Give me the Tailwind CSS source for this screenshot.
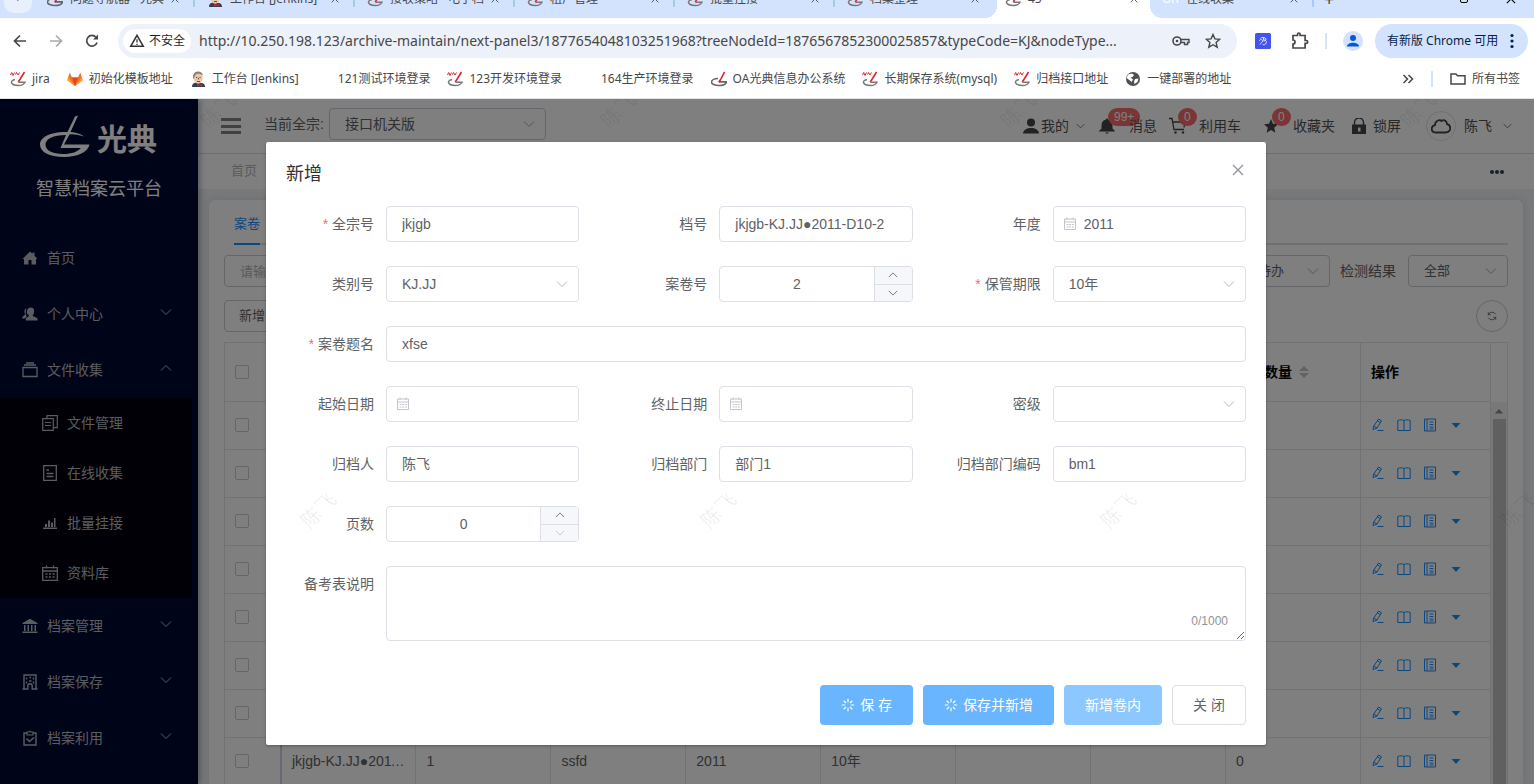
<!DOCTYPE html>
<html lang="zh-CN">
<head>
    <meta charset="UTF-8">
    <meta name="viewport" content="width=device-width, initial-scale=1.0">
    <title>智慧档案云平台</title>
    <script src="https://cdn.jsdelivr.net/npm/@tailwindcss/browser@4"></script>
</head>
<body class="h-screen flex flex-col overflow-hidden bg-white font-['Liberation_Sans','Noto_Sans_CJK_SC',sans-serif] text-sm text-[#606266]">

    <!-- shared icons -->
    <svg class="hidden">
        <symbol id="i-down" viewBox="0 0 12 12"><path d="M1 3.5l5 5 5-5" fill="none" stroke="currentColor"/></symbol>
        <symbol id="i-up" viewBox="0 0 12 12"><path d="M1 8.5l5-5 5 5" fill="none" stroke="currentColor"/></symbol>
        <symbol id="i-x" viewBox="0 0 12 12"><path d="M1 1l10 10M11 1L1 11" fill="none" stroke="currentColor" stroke-width="1.3"/></symbol>
        <symbol id="i-date" viewBox="0 0 14 14"><path d="M1.500 2h11v10.500h-11zM1.500 5h11M4 .5v2.500M10 .5v2.500M3.500 7.500h2M6.200 7.500h1.800M8.800 7.500h2M3.500 10h2M6.200 10h1.800M8.800 10h2" fill="none" stroke="currentColor"/></symbol>
        <symbol id="i-swoosh" viewBox="0 0 16 16"><path d="M7 7.500C3 7.500.5 9.300.5 11.200S4 14.500 8 14.500s7-1.700 7.500-3.600H8" fill="none" stroke="#666" stroke-width="1.6"/><path d="M13.500.8L9.600 8.500 7.600 11.200" fill="none" stroke="#e0262d" stroke-width="1.6"/></symbol>
        <symbol id="i-test" viewBox="0 0 16 16"><path d="M5 8.500C2.500 9 1.200 10.300 1.500 11.500c.5 1.900 3.500 3 7 3 3.300 0 5.500-1.200 6.500-3.300H8.500" fill="none" stroke="#777" stroke-width="1.4"/><path d="M14.500 1L10.200 8 8.200 11" fill="none" stroke="#e0262d" stroke-width="1.6"/><path d="M.5 4L1.700 1.500l1.300 3L4.500 1.500M5.500 3.500l1-2 1.500 2.500L9.500 1.500" fill="none" stroke="#e0262d"/></symbol>
        <symbol id="i-jenkins" viewBox="0 0 16 16"><path d="M2 16c0-3 1.500-4 4-4.500L12 12c2 .4 3 1.800 3 4z" fill="#2b3f55"/><path d="M3.500 6C3.500 2.500 5.500.8 8 .8S12.700 2.500 12.700 6c0 4-2 6.700-4.500 6.700S3.500 10 3.500 6z" fill="#e8c9a8"/><path d="M3.200 8C2.300 3.500 4.500.5 8 .5c2.800 0 4.500 1.600 4.800 4-1.800-1.500-3.800-2-6-1.700C4.800 4 5 6 3.200 8z" fill="#8a8078"/><path d="M6 6.500h1.200M9.500 6.500h1.200M8.500 7v1.500M7 10.500h3" stroke="#43352c" stroke-width=".8"/><path d="M7 12.800l2.500 1 2.500-1v3l-2.500-1-2.500 1z" fill="#c9252c"/></symbol>
        <symbol id="i-edit" viewBox="0 0 14 14"><path d="M2 11.500l.8-3.500L7.500 1l3 1.800L6 10zM6.500 2.800l2.800 1.800M2.800 8L6 10M6.500 12.500h6" fill="none" stroke="currentColor"/></symbol>
        <symbol id="i-book" viewBox="0 0 14 14"><path d="M.8 2.500C3 1.500 5.500 1.700 7 2.500c1.500-.8 4-1 6.200 0V12.500H7.800L7 13l-.8-.5H.8zM7 2.500V13" fill="none" stroke="currentColor"/></symbol>
        <symbol id="i-note" viewBox="0 0 14 14"><path d="M1.500 1h11v12h-11zM4 1v12M6.500 4h4M6.500 6.500h4M6.500 9h4M6.500 11h4" fill="none" stroke="currentColor"/></symbol>
        <symbol id="i-load" viewBox="0 0 14 14"><path d="M7 .8v3.400M7 9.800v3.400M.8 7h3.400M9.800 7h3.400M2.600 2.600L5 5M9 9l2.400 2.400M2.600 11.400L5 9M9 5l2.400-2.400" fill="none" stroke="currentColor" stroke-width="1.2"/></symbol>
    </svg>

    <!-- browser bar -->
    <header class="shrink-0 bg-white border-b border-[#dfe3e8] text-xs text-[#474747] font-['Noto_Sans','Noto_Sans_CJK_SC',sans-serif]">
        <div class="h-[18px] bg-[#d3e3fd] overflow-hidden flex flex-col justify-end">
            <div class="h-[38px] shrink-0 flex items-center">
                <div class="w-7 h-7 ml-1 mr-[3px] rounded-[10px] bg-[#e9f0fd] flex justify-center items-center"><svg class="size-2"><use href="#i-down"/></svg></div>
                <div class="w-40 pl-3 pr-3.5 flex items-center gap-[7px] border-r-2 border-[#a8c7fa]"><svg class="size-4 shrink-0"><use href="#i-swoosh"/></svg><span class="flex-1 whitespace-nowrap overflow-hidden">问题导航器 - 光典</span><svg class="size-2 shrink-0"><use href="#i-x"/></svg></div>
                <div class="w-40 pl-3 pr-3.5 flex items-center gap-[7px] border-r-2 border-[#a8c7fa]"><svg class="size-4 shrink-0"><use href="#i-jenkins"/></svg><span class="flex-1 whitespace-nowrap overflow-hidden">工作台 [Jenkins]</span><svg class="size-2 shrink-0"><use href="#i-x"/></svg></div>
                <div class="w-40 pl-3 pr-3.5 flex items-center gap-[7px] border-r-2 border-[#a8c7fa]"><svg class="size-4 shrink-0"><use href="#i-test"/></svg><span class="flex-1 whitespace-nowrap overflow-hidden">接收策略 - 电子档案</span><svg class="size-2 shrink-0"><use href="#i-x"/></svg></div>
                <div class="w-40 pl-3 pr-3.5 flex items-center gap-[7px] border-r-2 border-[#a8c7fa]"><svg class="size-4 shrink-0"><use href="#i-test"/></svg><span class="flex-1 whitespace-nowrap overflow-hidden">租户管理</span><svg class="size-2 shrink-0"><use href="#i-x"/></svg></div>
                <div class="w-40 pl-3 pr-3.5 flex items-center gap-[7px] border-r-2 border-[#a8c7fa]"><svg class="size-4 shrink-0"><use href="#i-test"/></svg><span class="flex-1 whitespace-nowrap overflow-hidden">批量挂接</span><svg class="size-2 shrink-0"><use href="#i-x"/></svg></div>
                <div class="w-[162px] self-stretch pl-3 pr-[18px] flex items-center gap-[7px]"><svg class="size-4 shrink-0"><use href="#i-test"/></svg><span class="flex-1 whitespace-nowrap overflow-hidden">档案整理</span><svg class="size-2 shrink-0"><use href="#i-x"/></svg></div>
                <!-- the white behind the active tab shows round its neighbours' corners -->
                <div class="w-[153px] self-stretch bg-white pl-2 pr-3 flex items-center gap-[7px] relative before:absolute before:-left-3 before:bottom-0 before:size-3 before:bg-[radial-gradient(circle_at_0_0,#d3e3fd_12px,#fff_12px)] after:absolute after:-right-3 after:bottom-0 after:size-3 after:bg-[radial-gradient(circle_at_100%_0,#d3e3fd_12px,#fff_12px)]"><svg class="size-4 shrink-0"><use href="#i-test"/></svg><span class="flex-1">45</span><svg class="size-2"><use href="#i-x"/></svg></div>
                <div class="w-[164px] pl-3 pr-3.5 flex items-center gap-2 border-r-2 border-[#a8c7fa]"><span class="text-white w-4">On</span><span class="flex-1">在线收集</span><svg class="size-2"><use href="#i-x"/></svg></div>
                <span class="pl-2.5 text-lg">+</span>
                <div class="ml-auto pr-[18px] flex items-center gap-[38px] text-black"><span class="size-2 border rounded-xs"></span><svg class="size-2.5"><use href="#i-x"/></svg></div>
            </div>
        </div>
        <div class="h-[44px] pt-0.5 pl-3 pr-1.5 flex items-center">
            <button aria-label="后退" class="w-4 mr-5"><svg class="size-4" viewBox="0 0 16 16"><path d="M14 8H3M8 2.500L2.500 8 8 13.500" fill="none" stroke="#474747" stroke-width="1.7"/></svg></button>
            <button aria-label="前进" class="w-4 mr-5"><svg class="size-4" viewBox="0 0 16 16"><path d="M2 8h11M8 2.500L13.500 8 8 13.500" fill="none" stroke="#aaa" stroke-width="1.7"/></svg></button>
            <button aria-label="重新加载" class="w-4 mr-[18px]"><svg class="size-4" viewBox="0 0 16 16"><path d="M13 9.500A5.300 5.300 0 1 1 12 4.300" fill="none" stroke="#474747" stroke-width="1.7"/><path d="M14 1.500v5H9z" fill="#474747"/></svg></button>
            <div class="flex-1 min-w-0 h-[34px] rounded-full bg-[#ecf1fa] pl-[5px] pr-4 flex items-center">
                <button class="h-6 w-[68px] shrink-0 rounded-full bg-white flex items-center justify-center gap-1 text-[#1f1f1f]">
                    <svg class="size-4" viewBox="0 0 16 16"><path d="M8 2.300L14.300 13.300H1.700z" fill="none" stroke="#333" stroke-width="1.5"/><path d="M8 6.300v3.300M8 10.700v1.300" stroke="#333" stroke-width="1.3"/></svg>不安全</button>
                <input aria-label="地址" class="flex-1 min-w-0 ml-2 bg-transparent text-sm outline-none" value="http://10.250.198.123/archive-maintain/next-panel3/1877654048103251968?treeNodeId=1876567852300025857&amp;typeCode=KJ&amp;nodeType...">
                <svg class="w-[18px] h-4 ml-4 mr-[15px] shrink-0" viewBox="0 0 18 16"><circle cx="5" cy="8" r="4" fill="none" stroke="#474747" stroke-width="1.6"/><circle cx="5" cy="8" r="1.3" fill="#474747"/><path d="M9 6.500h8v3h-1.500v2h-3v-2H9" fill="none" stroke="#474747" stroke-width="1.4"/></svg>
                <svg class="size-4 shrink-0" viewBox="0 0 16 16"><path d="M8 1.500l1.900 4.400 4.800.4-3.600 3.200 1.100 4.700L8 11.700l-4.200 2.500 1.100-4.700L1.300 6.300l4.800-.4z" fill="none" stroke="#474747" stroke-width="1.4"/></svg>
            </div>
            <svg class="size-4 ml-[18px] mr-5 shrink-0" viewBox="0 0 16 16"><rect width="16" height="16" rx="1.5" fill="#4355ee"/><path d="M5.500 5.500c.5-1.500 5-1.500 5.500.5.200 1.500-1.500 2-2.500 2M4.500 8c0-2 3-2 3 0s-2.500 2-2.500 3.500M9 7c2.500 0 3 2.500 1.500 4-1 1-2.500 1-3 0M8.500 4.500v3" fill="none" stroke="#dfe3ff"/></svg>
            <svg class="size-[18px] mr-4 shrink-0" viewBox="0 0 18 18"><path d="M2 3.500h4.500V2.300a1.300 1.300 0 0 1 2.600 0v1.200h5v5h1.200a1.400 1.400 0 0 1 0 2.800h-1.200V16H2v-4a2 2 0 0 0 0-4z" fill="none" stroke="#474747" stroke-width="1.7"/></svg>
            <span class="w-0.5 h-4 bg-[#d3e3fd] mr-4"></span>
            <svg class="size-5 mr-3 shrink-0" viewBox="0 0 20 20"><circle cx="10" cy="10" r="10" fill="#d3e3fd"/><circle cx="10" cy="7" r="3" fill="#0b57d0"/><path d="M4 15.500c0-5 12-5 12 0z" fill="#0b57d0"/></svg>
            <button class="h-[34px] w-[153px] shrink-0 rounded-full bg-[#d3e3fd] text-[#041e49] flex items-center pl-3 pr-3.5 justify-between whitespace-nowrap">有新版 Chrome 可用
                <svg class="w-1 h-4" viewBox="0 0 4 16"><g fill="#041e49"><circle cx="2" cy="2.5" r="1.6"/><circle cx="2" cy="8" r="1.6"/><circle cx="2" cy="13.5" r="1.6"/></g></svg></button>
        </div>
        <nav class="h-9 pb-0.5 pl-2.5 pr-3.5 flex items-center gap-[17px] whitespace-nowrap">
            <a href="#" class="flex items-center gap-1.5"><svg class="size-4"><use href="#i-test"/></svg>jira</a>
            <a href="#" class="flex items-center gap-1.5"><svg class="size-4" viewBox="0 0 16 16"><path d="M8 15L.3 9.200 2.700 1.500 5 6.500h6l2.300-5 2.400 7.700z" fill="#fc6d26"/><path d="M8 15L5 6.500h6z" fill="#e24329"/><path d="M8 15L.3 9.200l1-2.700zM8 15l7.700-5.800-1-2.700z" fill="#fca326"/></svg>初始化模板地址</a>
            <a href="#" class="flex items-center gap-1.5"><svg class="size-4"><use href="#i-jenkins"/></svg>工作台 [Jenkins]</a>
            <a href="#" class="flex items-center gap-1.5"><span class="size-4"></span>121测试环境登录</a>
            <a href="#" class="flex items-center gap-1.5"><svg class="size-4"><use href="#i-test"/></svg>123开发环境登录</a>
            <a href="#" class="flex items-center gap-1.5"><span class="size-4"></span>164生产环境登录</a>
            <a href="#" class="flex items-center gap-1.5"><svg class="size-4"><use href="#i-swoosh"/></svg>OA光典信息办公系统</a>
            <a href="#" class="flex items-center gap-1.5"><svg class="size-4"><use href="#i-test"/></svg>长期保存系统(mysql)</a>
            <a href="#" class="flex items-center gap-1.5"><svg class="size-4"><use href="#i-test"/></svg>归档接口地址</a>
            <a href="#" class="flex items-center gap-1.5"><svg class="size-4" viewBox="0 0 16 16"><circle cx="8" cy="8" r="7" fill="#4d5156"/><path d="M3 3.500L7 2.500 9 4 7.500 6 5.500 6.500 8 8.500 6.500 11 5 9.500 1.500 7zM10 8l3.500-.5-1 3.500L9.500 13l-.5-2.500z" fill="#fff"/></svg>一键部署的地址</a>
            <button aria-label="更多书签" class="ml-auto"><svg class="w-3 h-4" viewBox="0 0 12 16"><path d="M1.500 4l4 4-4 4M6.500 4l4 4-4 4" fill="none" stroke="#474747" stroke-width="1.5"/></svg></button>
            <span class="w-0.5 h-4 bg-[#d3e3fd]"></span>
            <a href="#" class="flex items-center gap-1.5"><svg class="size-4" viewBox="0 0 16 16"><path d="M1 3h5l1.500 1.700H15V13H1z" fill="none" stroke="#474747" stroke-width="1.5"/></svg>所有书签</a>
        </nav>
    </header>

    <div class="flex-1 min-h-0 relative overflow-hidden">
        <div class="h-full flex">

            <!-- sidebar -->
            <aside class="w-[198px] shrink-0 bg-[#000830] text-[#b4b9c0] shadow-[2px_0_6px_#00152959] z-10">
                <div class="h-[74px] pl-[39px] flex items-center gap-1.5 text-white">
                    <svg class="w-[52px] h-11 shrink-0" viewBox="0 0 52 44"><path fill="currentColor" fill-rule="evenodd" d="M39 1.500l-7.500 16.500C37 18.500 42 20 45 22.500 38 20.500 33.500 20 30.500 20.500L25 30.500h25.500C49 38 39 43 25 43 10 43 1 38 1 30.500 1 23 12 17.500 28.500 18L36 2.500zM27 21C14 21 6.500 25 6.500 30.500c0 6 7 9.500 17.500 9.500 9 0 14.500-2.200 18-6H21.500z"/></svg>
                    <span class="pt-2 text-[30px] leading-10 font-bold">光典</span>
                </div>
                <h1 class="h-[57px] pb-[25px] text-lg leading-8 text-center text-white">智慧档案云平台</h1>
                <ul>
                    <li><a href="#" class="h-14 pl-[22px] flex items-center gap-2"><svg class="size-4" viewBox="0 0 16 16"><path d="M8 1.500l2.500 2.300V2.500h2v3.200L15.500 9H14v5.500H9.500V10h-3v4.500H2V9H.5z" fill="currentColor"/></svg><span class="pl-px">首页</span></a></li>
                    <li><a href="#" class="h-14 pl-[22px] pr-[26px] flex items-center gap-2"><svg class="size-4" viewBox="0 0 16 16"><path d="M5 7.500C4.500 5 5.500 1.500 8.800 1.500s4 3.500 3 6c-.5 1.200-1 1.500-1 2.500l4.700 2.200v2.300H3.800v-2.300L7 10c0-1-1.500-1.300-2-2.500z" fill="currentColor"/><path d="M4.500 2.500C2 3 2 6.500 3.300 8.300L.3 11v1.500h2.500l2-2C3.500 8.500 3.300 5 4.500 2.500z" fill="currentColor"/></svg><span class="pl-px">个人中心</span><svg class="size-3 ml-auto mb-1"><use href="#i-down"/></svg></a></li>
                    <li>
                        <a href="#" class="h-14 pl-[22px] pr-[26px] flex items-center gap-2"><svg class="size-4" viewBox="0 0 16 16"><path d="M1 5.500h14v9H1z" fill="none" stroke="currentColor" stroke-width="1.3"/><path d="M2 3h12M4 1h8" stroke="currentColor" stroke-width="1.3"/></svg><span class="pl-px">文件收集</span><svg class="size-3 ml-auto mb-1"><use href="#i-up"/></svg></a>
                        <ul class="mr-1.5 bg-[#00000c]">
                            <li><a href="#" class="h-[50px] pl-[42px] flex items-center gap-2"><svg class="size-4" viewBox="0 0 16 16"><path d="M.7 3.700h10.600v11.600H.7zM5 3.500V.7h10.300v12H11.500M3 7.500h6M3 10.500h6" fill="none" stroke="currentColor" stroke-width="1.2"/></svg><span class="pl-px">文件管理</span></a></li>
                            <li><a href="#" class="h-[50px] pl-[42px] flex items-center gap-2"><svg class="size-4" viewBox="0 0 16 16"><path d="M1.700.7h12.600v14.600H1.700zM4.500 5h2.500M4.500 8.500h7M4.500 11.500h7" fill="none" stroke="currentColor" stroke-width="1.3"/></svg><span class="pl-px">在线收集</span></a></li>
                            <li><a href="#" class="h-[50px] pl-[42px] flex items-center gap-2"><svg class="size-4" viewBox="0 0 16 16"><path d="M1 12.500h14V14H1zM3 9h2v3H3zM6 5.500h2V12H6zM9 7.500h2V12H9zM12 3h1.500v9H12z" fill="currentColor"/></svg><span class="pl-px">批量挂接</span></a></li>
                            <li><a href="#" class="h-[50px] pl-[42px] flex items-center gap-2"><svg class="size-4" viewBox="0 0 16 16"><path d="M.7 2.700h14.600v12.600H.7zM.7 6h14.600M4.500.5v3M11.500.5v3M3.500 9h2M7 9h2M10.500 9h2M3.500 12h2M7 12h2M10.500 12h2" fill="none" stroke="currentColor" stroke-width="1.3"/></svg><span class="pl-px">资料库</span></a></li>
                        </ul>
                    </li>
                    <li><a href="#" class="h-14 pl-[22px] pr-[26px] flex items-center gap-2"><svg class="size-4" viewBox="0 0 16 16"><path d="M8 .8l7.500 4.200v1H.5V5zM2 7h1.500v6H2zM5.500 7H7v6H5.500zM9 7h1.500v6H9zM12.500 7H14v6h-1.500zM.5 13.500h15V15H.5z" fill="currentColor"/></svg><span class="pl-px">档案管理</span><svg class="size-3 ml-auto mb-1"><use href="#i-down"/></svg></a></li>
                    <li><a href="#" class="h-14 pl-[22px] pr-[26px] flex items-center gap-2"><svg class="size-4" viewBox="0 0 16 16"><path d="M2 15V1h12v14M.5 15h5.300v-3a2.200 2.200 0 0 1 4.400 0v3h5.300M4.500 3.500v2M7.500 3.500H9M11.500 3.500v2M4.500 7.500v2M7 7h2.500M11.500 7.500v2" fill="none" stroke="currentColor" stroke-width="1.4"/></svg><span class="pl-px">档案保存</span><svg class="size-3 ml-auto mb-1"><use href="#i-down"/></svg></a></li>
                    <li><a href="#" class="h-14 pl-[22px] pr-[26px] flex items-center gap-2"><svg class="size-4" viewBox="0 0 16 16"><path d="M5 3H2v12h12V3h-3" fill="none" stroke="currentColor" stroke-width="1.4"/><path d="M5 2h2a1.200 1.200 0 0 1 2 0h2v3H5z" fill="none" stroke="currentColor" stroke-width="1.2"/><path d="M4.500 8.500L7.500 11.500 12 7.500" fill="none" stroke="currentColor" stroke-width="1.6"/></svg><span class="pl-px">档案利用</span><svg class="size-3 ml-auto mb-1"><use href="#i-down"/></svg></a></li>
                </ul>
            </aside>

            <main class="flex-1 min-w-0 flex flex-col bg-[#f0f2f5]">
                <!-- top bar -->
                <div class="h-[55px] shrink-0 bg-white border-b border-[#d8dce5] pl-[23px] pr-[22px] flex items-center text-[#515151]">
                    <button aria-label="折叠菜单" class="w-5 h-4 flex flex-col justify-between mr-[23px]"><span class="h-[3px] w-full bg-[#808285]"></span><span class="h-[3px] w-full bg-[#808285]"></span><span class="h-[3px] w-full bg-[#808285]"></span></button>
                    <div class="pb-1 flex items-center">
                        <label for="fonds" class="w-[65px] text-[#606266]">当前全宗:</label>
                        <div class="relative w-[217px]">
                            <select id="fonds" class="block w-full h-8 pl-[15px] border border-[#c8ccd4] rounded appearance-none text-[#606266]"><option>接口机关版</option></select>
                            <svg class="size-3 absolute right-[11px] top-2.5 text-[#a8abb2]"><use href="#i-down"/></svg>
                        </div>
                    </div>
                    <button class="ml-auto flex items-center"><svg class="size-4 mr-0.5" viewBox="0 0 16 16"><circle cx="8" cy="4.5" r="4" fill="#444"/><path d="M0 15.500C0 8 16 8 16 15.500z" fill="#444"/></svg>我的<svg class="w-[9px] h-3 ml-[7px]"><use href="#i-down"/></svg></button>
                    <button class="ml-3.5 relative flex items-center"><svg class="size-4 mr-3.5" viewBox="0 0 16 16"><path d="M8 0l1 1.500c3 .5 4.500 2.800 4.500 6v3L16 13v.5H0V13l2.500-2.500v-3c0-3.200 1.500-5.500 4.500-6zM6 14.500h4L8 16z" fill="#444"/></svg><span class="absolute left-[9px] -top-2 h-[18px] px-1.5 rounded-full bg-[#f56c6c] text-white text-xs leading-[18px]">99+</span><span class="relative">消息</span></button>
                    <button class="ml-3 relative flex items-center"><svg class="w-[17px] h-[18px] mr-[13px]" viewBox="0 0 17 18"><path d="M0 1.500h3L5 12.500h10M4 5h12l-1 5.500" fill="none" stroke="#444" stroke-width="1.3"/><circle cx="6.500" cy="15.5" r="1.2" fill="#444"/><circle cx="14" cy="15.5" r="1.2" fill="#444"/></svg>利用车<span class="absolute left-[9px] -top-2 h-[18px] px-1.5 rounded-full bg-[#f56c6c] text-white text-xs leading-[18px]">0</span></button>
                    <button class="ml-[23px] relative flex items-center"><svg class="size-3.5 mr-[15px]" viewBox="0 0 14 14"><path d="M7 0l2 4.800 5 .5-3.800 3.400 1.200 5L7 11l-4.400 2.700 1.200-5L0 5.300l5-.5z" fill="#444"/></svg>收藏夹<span class="absolute left-2 -top-2 h-[18px] px-1.5 rounded-full bg-[#f56c6c] text-white text-xs leading-[18px]">0</span></button>
                    <button class="ml-[17px] flex items-center"><svg class="w-3.5 h-4 mr-[7px]" viewBox="0 0 14 16"><path d="M2.500 7V4.500a4.500 4.500 0 0 1 9 0V7" fill="none" stroke="#444" stroke-width="1.4"/><path fill-rule="evenodd" d="M0 6.500h14V16H0zM6 9.500h2.500v4H6z" fill="#444"/></svg>锁屏</button>
                    <button class="ml-[25px] flex items-center"><span class="size-[30px] mr-2 rounded-full border border-[#e0e0e0] flex items-center justify-center"><svg class="w-5 h-4" viewBox="0 0 20 16"><path d="M5 14.500C-.5 14.500-.5 8 4 7 4 3 8.500 1 10.500 3c2-1.800 5.500-.3 5.500 3 4.500 1 4.500 8.500-1.500 8.500z" fill="none" stroke="#444" stroke-width="1.8"/></svg></span>陈飞<svg class="w-[9px] h-3 ml-[11px]"><use href="#i-down"/></svg></button>
                </div>
                <div class="h-[35px] shrink-0 bg-white pl-[33px] pr-[30px] flex items-center justify-between">
                    <a href="#" class="text-[13px] text-[#b4b7bd]">首页</a>
                    <button aria-label="更多" class="flex gap-px"><span class="size-1 rounded-full bg-[#304156]"></span><span class="size-1 rounded-full bg-[#304156]"></span><span class="size-1 rounded-full bg-[#304156]"></span></button>
                </div>

                <section class="mt-[11px] ml-[11px] mr-[11px] flex-1 min-h-0 overflow-hidden bg-white rounded-t-md shadow-[0_0_8px_#0000001a] px-[15px] text-[13px]">
                    <div class="ml-2.5 h-[45px] border-b-2 border-[#dcdfe6] flex">
                        <a href="#" class="h-[45px] leading-[48px] border-b-2 border-[#1890ff] text-[#1890ff]">案卷</a>
                    </div>
                    <div class="mt-2.5 h-8 flex items-center">
                        <input aria-label="关键字" placeholder="请输入关键字" class="w-60 h-8 px-[15px] border border-[#c8ccd4] rounded placeholder:text-[#b0b3b9]">
                        <div class="relative ml-auto w-[88px] mr-2.5">
                            <select aria-label="待办状态" class="block w-full h-8 pl-[15px] border border-[#c8ccd4] rounded appearance-none"><option>待办</option></select>
                            <svg class="size-3 absolute right-[11px] top-2.5 text-[#a8abb2]"><use href="#i-down"/></svg>
                        </div>
                        <label for="check" class="text-sm mr-3">检测结果</label>
                        <div class="relative w-[100px]">
                            <select id="check" class="block w-full h-8 pl-[15px] border border-[#c8ccd4] rounded appearance-none"><option>全部</option></select>
                            <svg class="size-3 absolute right-[11px] top-2.5 text-[#a8abb2]"><use href="#i-down"/></svg>
                        </div>
                    </div>
                    <div class="mt-[13px] h-8 flex justify-between">
                        <button class="h-8 px-3.5 border border-[#c8ccd4] rounded">新增</button>
                        <button aria-label="刷新" class="size-8 border border-[#c8ccd4] rounded-full flex items-center justify-center"><svg class="size-2.5" viewBox="0 0 12 12"><path d="M1.500 4.500A5 5 0 0 1 10.500 4M10.500 7.500A5 5 0 0 1 1.500 8M1.500 1.500v3h3M10.500 10.500v-3h-3" fill="none" stroke="currentColor"/></svg></button>
                    </div>
                    <div class="mt-2.5 flex border-t border-x border-[#dfe6ec]">
                        <table class="flex-1 w-0 table-fixed border-collapse text-sm text-left">
                            <thead>
                                <tr class="h-[58px] text-black border-b border-[#dfe6ec]">
                                    <th class="w-[56px] pl-2.5 border-r-2 border-[#ccd3e4]"><input type="checkbox" aria-label="全选" class="block size-3.5 appearance-none border border-[#c8ccd4] rounded-xs"></th>
                                    <th class="px-2.5 border-r border-[#dfe6ec]">档号</th>
                                    <th class="px-2.5 border-r border-[#dfe6ec]">案卷号</th>
                                    <th class="px-2.5 border-r border-[#dfe6ec]">案卷题名</th>
                                    <th class="px-2.5 border-r border-[#dfe6ec]">年度</th>
                                    <th class="px-2.5 border-r border-[#dfe6ec]">保管期限</th>
                                    <th class="px-2.5 border-r border-[#dfe6ec]">起始日期</th>
                                    <th class="px-2.5 border-r border-[#dfe6ec]">终止日期</th>
                                    <th class="px-2.5 border-r border-[#dfe6ec]"><span class="flex items-center gap-[7px] whitespace-nowrap">卷内数量<svg class="w-2.5 h-3.5" viewBox="0 0 10 14"><path d="M5 1l5 5H0zM0 8h10l-5 5z" fill="#c0c4cc"/></svg></span></th>
                                    <th class="w-[130px] px-2.5 border-r border-[#dfe6ec]">操作</th>
                                </tr>
                            </thead>
                            <tbody id="rows"></tbody>
                        </table>
                        <div class="w-4 pt-[59px] flex flex-col">
                            <div class="flex-1 bg-[#f1f1f1] flex flex-col items-center">
                                <svg class="w-2 h-[17px] shrink-0" viewBox="0 0 8 17"><path d="M4 7l4 4.500H0z" fill="#8a8a8a"/></svg>
                                <div class="w-[13px] flex-1 bg-[#c1c1c1]"></div>
                            </div>
                        </div>
                    </div>
                </section>
            </main>
        </div>

        <!-- dialog -->
        <div class="absolute inset-0 z-20 bg-black/50 pt-[43px] pr-0.5">
            <form class="w-[1000px] mx-auto bg-white rounded-xs shadow-[0_1px_3px_#0000004d] p-5">
                <div class="flex justify-between mb-5 h-6">
                    <h2 class="text-lg leading-6 text-[#303133]">新增</h2>
                    <button type="button" aria-label="关闭对话框" class="size-4 flex items-center justify-center text-[#909399]"><svg class="size-3"><use href="#i-x"/></svg></button>
                </div>
                <div class="grid grid-cols-3 gap-x-10 gap-y-6 leading-9">
                    <div class="flex"><label for="f1" class="w-[100px] pr-3 text-right shrink-0"><span class="text-[#f56c6c]">*</span> 全宗号</label><input id="f1" value="jkjgb" class="min-w-0 flex-1 h-9 px-[15px] border border-[#dcdfe6] rounded"></div>
                    <div class="flex"><label for="f2" class="w-[100px] pr-3 text-right shrink-0">档号</label><input id="f2" value="jkjgb-KJ.JJ●2011-D10-2" class="min-w-0 flex-1 h-9 px-[15px] border border-[#dcdfe6] rounded"></div>
                    <div class="flex"><label for="f3" class="w-[100px] pr-3 text-right shrink-0">年度</label>
                        <div class="relative flex-1 min-w-0"><input id="f3" value="2011" class="block w-full h-9 pl-[30px] border border-[#dcdfe6] rounded"><svg class="size-3.5 absolute left-2.5 top-[11px] text-[#c0c4cc]"><use href="#i-date"/></svg></div></div>

                    <div class="flex"><label for="f4" class="w-[100px] pr-3 text-right shrink-0">类别号</label>
                        <div class="relative flex-1 min-w-0"><select id="f4" class="block w-full h-9 pl-[15px] leading-5 border border-[#dcdfe6] rounded appearance-none"><option>KJ.JJ</option></select><svg class="size-3 absolute right-[11px] top-3 text-[#b4b8c0]"><use href="#i-down"/></svg></div></div>
                    <div class="flex"><label for="f5" class="w-[100px] pr-3 text-right shrink-0">案卷号</label>
                        <div class="flex flex-1 min-w-0 h-9 border border-[#dcdfe6] rounded overflow-hidden"><input id="f5" value="2" class="flex-1 min-w-0 text-center">
                            <div class="w-[38px] border-l border-[#dcdfe6] bg-[#f5f7fa] flex flex-col"><button type="button" aria-label="加一" class="flex-1 border-b border-[#dcdfe6] flex items-center justify-center"><svg class="size-2.5"><use href="#i-up"/></svg></button><button type="button" aria-label="减一" class="flex-1 flex items-center justify-center"><svg class="size-2.5"><use href="#i-down"/></svg></button></div></div></div>
                    <div class="flex"><label for="f6" class="w-[100px] pr-3 text-right shrink-0"><span class="text-[#f56c6c]">*</span> 保管期限</label>
                        <div class="relative flex-1 min-w-0"><select id="f6" class="block w-full h-9 pl-[15px] leading-5 border border-[#dcdfe6] rounded appearance-none"><option>10年</option></select><svg class="size-3 absolute right-[11px] top-3 text-[#b4b8c0]"><use href="#i-down"/></svg></div></div>

                    <div class="flex col-span-3"><label for="f7" class="w-[100px] pr-3 text-right shrink-0"><span class="text-[#f56c6c]">*</span> 案卷题名</label><input id="f7" value="xfse" class="min-w-0 flex-1 h-9 px-[15px] border border-[#dcdfe6] rounded"></div>

                    <div class="flex"><label for="f8" class="w-[100px] pr-3 text-right shrink-0">起始日期</label>
                        <div class="relative flex-1 min-w-0"><input id="f8" class="block w-full h-9 pl-[30px] border border-[#dcdfe6] rounded"><svg class="size-3.5 absolute left-2.5 top-[11px] text-[#c0c4cc]"><use href="#i-date"/></svg></div></div>
                    <div class="flex"><label for="f9" class="w-[100px] pr-3 text-right shrink-0">终止日期</label>
                        <div class="relative flex-1 min-w-0"><input id="f9" class="block w-full h-9 pl-[30px] border border-[#dcdfe6] rounded"><svg class="size-3.5 absolute left-2.5 top-[11px] text-[#c0c4cc]"><use href="#i-date"/></svg></div></div>
                    <div class="flex"><label for="f10" class="w-[100px] pr-3 text-right shrink-0">密级</label>
                        <div class="relative flex-1 min-w-0"><select id="f10" class="block w-full h-9 pl-[15px] leading-5 border border-[#dcdfe6] rounded appearance-none"><option></option></select><svg class="size-3 absolute right-[11px] top-3 text-[#b4b8c0]"><use href="#i-down"/></svg></div></div>

                    <div class="flex"><label for="f11" class="w-[100px] pr-3 text-right shrink-0">归档人</label><input id="f11" value="陈飞" class="min-w-0 flex-1 h-9 px-[15px] border border-[#dcdfe6] rounded"></div>
                    <div class="flex"><label for="f12" class="w-[100px] pr-3 text-right shrink-0">归档部门</label><input id="f12" value="部门1" class="min-w-0 flex-1 h-9 px-[15px] border border-[#dcdfe6] rounded"></div>
                    <div class="flex"><label for="f13" class="w-[100px] pr-3 text-right shrink-0">归档部门编码</label><input id="f13" value="bm1" class="min-w-0 flex-1 h-9 px-[15px] border border-[#dcdfe6] rounded"></div>

                    <div class="flex"><label for="f14" class="w-[100px] pr-3 text-right shrink-0">页数</label>
                        <div class="flex flex-1 min-w-0 h-9 border border-[#dcdfe6] rounded overflow-hidden"><input id="f14" value="0" class="flex-1 min-w-0 text-center">
                            <div class="w-[38px] border-l border-[#dcdfe6] bg-[#f5f7fa] flex flex-col"><button type="button" aria-label="加一" class="flex-1 border-b border-[#dcdfe6] flex items-center justify-center"><svg class="size-2.5"><use href="#i-up"/></svg></button><button type="button" aria-label="减一" class="flex-1 flex items-center justify-center text-[#c0c4cc]"><svg class="size-2.5"><use href="#i-down"/></svg></button></div></div></div>

                    <div class="flex col-span-3"><label for="f15" class="w-[100px] pr-3 text-right shrink-0">备考表说明</label>
                        <div class="relative flex-1 h-[75px]"><textarea id="f15" class="block w-full h-[75px] px-[15px] border border-[#dcdfe6] rounded resize-y"></textarea><span class="absolute right-[18px] bottom-3 text-xs leading-4 text-[#909399]">0/1000</span></div></div>
                </div>
                <div class="mt-11 flex justify-end gap-2.5">
                    <button type="button" class="h-10 px-[21px] rounded bg-[#69b5ff] text-white flex items-center gap-[5px]"><svg class="size-3.5"><use href="#i-load"/></svg>保 存</button>
                    <button type="button" class="h-10 px-[21px] rounded bg-[#69b5ff] text-white flex items-center gap-[5px]"><svg class="size-3.5"><use href="#i-load"/></svg>保存并新增</button>
                    <button type="button" class="h-10 px-[21px] rounded bg-[#8cc8ff] text-white">新增卷内</button>
                    <button type="button" class="h-10 px-5 rounded border border-[#dcdfe6]">关 闭</button>
                </div>
            </form>
        </div>

        <!-- watermark tiles, laid over everything -->
        <div id="marks" class="absolute inset-0 z-30 overflow-hidden pointer-events-none"></div>
    </div>

    <script>
        const row = ['jkjgb-KJ.JJ●2011-D10-1', '1', 'ssfd', '2011', '10年', '', '', '0'];

        function renderRows() {
            let html = '';
            for (let i = 0; i < 8; i++) {
                html += '<tr class="h-12 border-b border-[#dfe6ec]">';
                html += '<td class="pl-2.5 border-r-2 border-[#ccd3e4]"><input type="checkbox" aria-label="选择" class="block size-3.5 appearance-none border border-[#c8ccd4] rounded-xs"></td>';
                row.forEach(text => {
                    html += `<td class="px-2.5 border-r border-[#dfe6ec] truncate">${text}</td>`;
                });
                html += `<td class="px-2.5 border-r border-[#dfe6ec]"><div class="flex gap-3 items-center text-[#1890ff]">
                    <button aria-label="编辑"><svg class="block size-3.5"><use href="#i-edit"/></svg></button>
                    <button aria-label="查看"><svg class="block size-3.5"><use href="#i-book"/></svg></button>
                    <button aria-label="目录"><svg class="block size-3.5"><use href="#i-note"/></svg></button>
                    <button aria-label="更多操作"><svg class="block size-3.5" viewBox="0 0 14 14"><path d="M2.500 5h9L7 10z" fill="currentColor"/></svg></button>
                </div></td></tr>`;
            }
            document.getElementById('rows').innerHTML = html;
        }

        function renderMarks() {
            let html = '';
            [[198, -2], [298, 398]].forEach(([left, top]) => {
                for (let x = left; x < window.innerWidth; x += 400) {
                    html += `<span class="absolute w-11 h-6 -rotate-45 text-xl leading-6 font-light text-black/10" style="left:${x}px;top:${top}px">陈飞</span>`;
                }
            });
            document.getElementById('marks').innerHTML = html;
        }

        renderRows();
        renderMarks();
    </script>
</body>
</html>
